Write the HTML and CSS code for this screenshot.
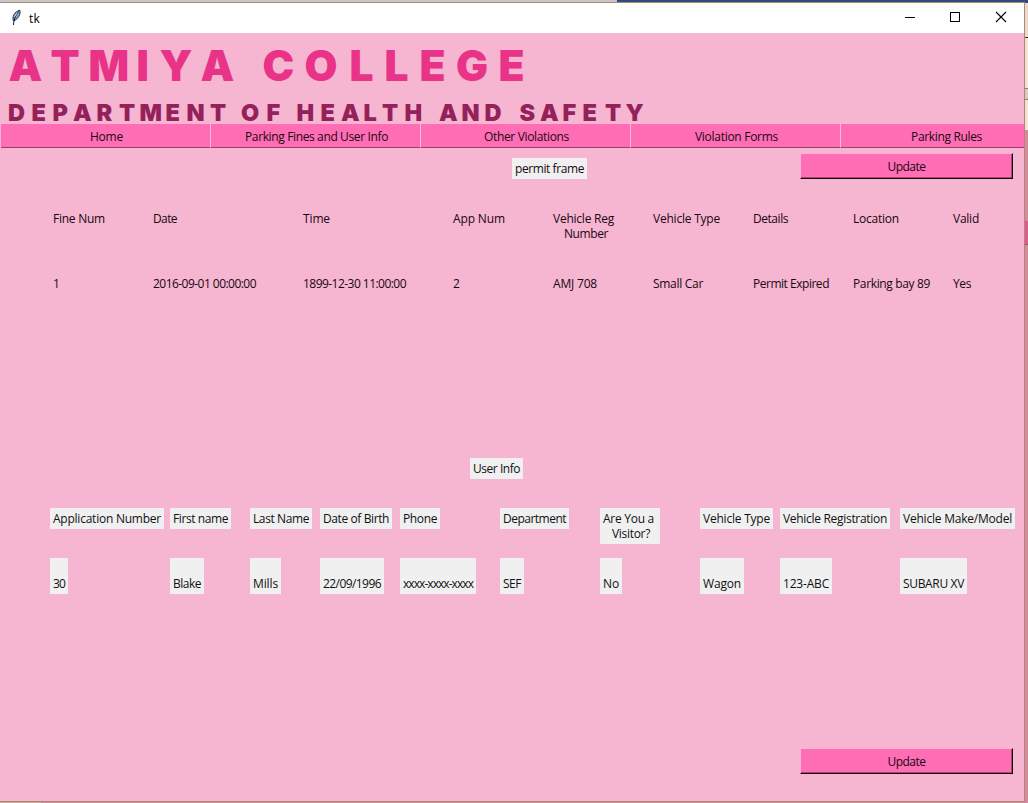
FILE: index.html
```html
<!DOCTYPE html>
<html lang="en">
<head>
<meta charset="utf-8">
<title>tk</title>
<link rel="stylesheet" href="styles.css">
</head>
<body>
<div class="desktop">
<div class="column">
  <div class="backdrop-top"><i></i></div>
  <main class="window">
    <header class="titlebar">
      <svg class="feather" width="12" height="18" viewBox="0 0 12 18"><path d="M3.500 12C1.700 8 4.500 2.600 9.800 1.200C11 4.500 8.800 9.800 3.500 12Z" fill="#7fa3d6" stroke="#18222f" stroke-width=".9"/><path d="M8.800 2.500C6 6 4 9 3.500 16" fill="none" stroke="#10151c"/><path d="M4.400 8L7.200 3.800" stroke="#b9d5f3"/></svg>
      <span class="name" data-w="11">tk</span>
      <svg class="controls" width="104" height="12" viewBox="0 0 104 12" fill="none" stroke="#000" stroke-width="1"><path d="M1 6.500H11"/><rect x="46.500" y="1.500" width="9" height="9"/><path d="M92 1L102 11M102 1L92 11" stroke-width="1.100"/></svg>
    </header>
    <svg class="banner" width="1024" height="91" viewBox="0 33 1024 91">
      <text class="college" y="81" x="8.500 50.500 88.500 136.500 159.500 200.500 247 262.500 304.500 349.500 384.500 419.500 456 498.500">ATMIYA COLLEGE</text>
      <text class="department" y="121" x="8 31.500 52.500 73 96.500 119 139.500 165.500 186.500 210 230 241 266.500 285 296.500 320.500 341 363.500 382 404.500 425 439 461.500 484.500 506 519.500 540 562.500 582.500 605 625.500">DEPARTMENT OF HEALTH AND SAFETY</text>
    </svg>
    <nav class="nav">
      <button><span data-w="33">Home</span></button>
      <button><span data-w="143">Parking Fines and User Info</span></button>
      <button><span data-w="85">Other Violations</span></button>
      <button><span data-w="83">Violation Forms</span></button>
      <button><span data-w="71">Parking Rules</span></button>
    </nav>
    <section class="permits">
      <div class="toolbar">
        <div class="label"><span data-w="69">permit frame</span></div>
        <button class="update"><span data-w="38">Update</span></button>
      </div>
      <div class="grid fines">
        <div class="label"><span data-w="52">Fine Num</span></div>
        <div class="label"><span data-w="24">Date</span></div>
        <div class="label"><span data-w="27">Time</span></div>
        <div class="label"><span data-w="52">App Num</span></div>
        <div class="label"><span data-w="61">Vehicle Reg</span><span class="second" data-w="44">Number</span></div>
        <div class="label"><span data-w="67">Vehicle Type</span></div>
        <div class="label"><span data-w="35">Details</span></div>
        <div class="label"><span data-w="46">Location</span></div>
        <div class="label"><span data-w="26">Valid</span></div>
        <div class="label value"><span data-w="6">1</span></div>
        <div class="label value"><span data-w="103">2016-09-01 00:00:00</span></div>
        <div class="label value"><span data-w="103">1899-12-30 11:00:00</span></div>
        <div class="label value"><span data-w="6">2</span></div>
        <div class="label value"><span data-w="44">AMJ 708</span></div>
        <div class="label value"><span data-w="50">Small Car</span></div>
        <div class="label value"><span data-w="76">Permit Expired</span></div>
        <div class="label value"><span data-w="77">Parking bay 89</span></div>
        <div class="label value"><span data-w="18">Yes</span></div>
      </div>
    </section>
    <section class="users">
      <div class="label heading"><span data-w="47">User Info</span></div>
      <div class="grid people">
        <div class="label"><span data-w="108">Application Number</span></div>
        <div class="label"><span data-w="55">First name</span></div>
        <div class="label"><span data-w="56">Last Name</span></div>
        <div class="label"><span data-w="66">Date of Birth</span></div>
        <div class="label"><span data-w="34">Phone</span></div>
        <div class="label"><span data-w="63">Department</span></div>
        <div class="label visitor"><span data-w="51">Are You a</span><span class="second" data-w="38">Visitor?</span></div>
        <div class="label"><span data-w="67">Vehicle Type</span></div>
        <div class="label"><span data-w="104">Vehicle Registration</span></div>
        <div class="label"><span data-w="109">Vehicle Make/Model</span></div>
        <div class="label value"><span data-w="12">30</span></div>
        <div class="label value"><span data-w="28">Blake</span></div>
        <div class="label value"><span data-w="25">Mills</span></div>
        <div class="label value"><span data-w="58">22/09/1996</span></div>
        <div class="label value"><span data-w="70">xxxx-xxxx-xxxx</span></div>
        <div class="label value"><span data-w="18">SEF</span></div>
        <div class="label value"><span data-w="16">No</span></div>
        <div class="label value"><span data-w="38">Wagon</span></div>
        <div class="label value"><span data-w="46">123-ABC</span></div>
        <div class="label value"><span data-w="61">SUBARU XV</span></div>
      </div>
      <button class="update"><span data-w="38">Update</span></button>
    </section>
  </main>
  <div class="backdrop-bottom"></div>
</div>
<aside class="backdrop-right"></aside>
</div>
<script src="labels.js"></script>
</body>
</html>
```

FILE: styles.css
```css
* { box-sizing: border-box; }
body { margin: 0; overflow: hidden; background: #d18a9c; color: #190812; font: 12px/15px "Open Sans", "Noto Sans", sans-serif; }
.desktop { display: flex; width: 1028px; height: 803px; }
.column { width: 1025px; display: flex; flex-direction: column; }
.backdrop-top { height: 2px; background: #304c83; flex: none; }
.backdrop-top i { display: block; width: 617px; height: 2px; background: #c4c8cc; }
.window { height: 800px; border: solid #b1896a; border-width: 1px 1px 1px 0; background: #f6b5d0; display: flex; flex-direction: column; overflow: hidden; flex: none; }
.backdrop-bottom { height: 1px; background: linear-gradient(90deg, #c5a99e 41px, #d08c9e 41px); }
.backdrop-right { width: 3px; background: linear-gradient(#304c83 3px, #e9dbd4 3px 37px, #39302d 37px 38px, #f0e2db 38px 88px, #8e7f7b 88px 89px, #d8cbc5 89px 99px, #8e7f7b 99px 100px, #f0e2db 100px 130px, #d58b9f 130px 221px, #dc5c90 221px 244px, #98586c 244px 245px, #d58b9f 245px); }
.titlebar { height: 30px; flex: none; background: #fff; color: #000; display: flex; align-items: center; padding: 0 16px 0 10px; }
.titlebar .name { margin-left: 7px; }
.controls { margin-left: auto; margin-top: -2px; }
.feather { margin-top: -1px; }
.banner { display: block; flex: none; }
.college, .department { font-family: Inter, sans-serif; font-weight: 900; }
.college { font-size: 42.5px; fill: #e83389; }
.department { font-size: 23.5px; fill: #942159; }
button { font: inherit; color: inherit; padding: 0; border: 0; background: #ff6eb4; display: flex; justify-content: center; align-items: center; }
.nav { display: flex; width: 1051px; flex: none; padding-left: 1px; }
.nav button { width: 210px; height: 24px; border-bottom: 1px solid #9c3d6d; border-right: 1px solid #f7bde0; padding: 1px 0 0 2px; }
span { display: block; white-space: nowrap; width: max-content; }
.permits { height: 310px; flex: none; padding-top: 5px; }
.toolbar { display: grid; grid-template-columns: 512px 288px 214px; height: 55px; align-items: start; }
.toolbar .label { grid-column: 2; margin-top: 5px; background: #f0f0f0; }
.update { width: 213px; height: 26px; border: 1px solid; border-color: #f9b1dc #16020c #16020c #f9b1dc; box-shadow: inset -1px -1px #a84776; }
.grid { display: grid; padding-left: 50px; grid-template-rows: 50px 50px; align-items: start; }
.fines { grid-template-columns: 100px 150px 150px 100px 100px 100px 100px 100px 74px; }
.people { grid-template-columns: 120px 80px 70px 80px 100px 100px 100px 80px 120px 124px; margin-top: 29px; }
.label { width: max-content; padding: 3px; }
.value { padding-top: 18px; }
.second { margin-left: 11px; }
.visitor { width: 60px; }
.visitor .second { margin-left: 9px; }
.users .label { background: #f0f0f0; color: #111; }
.heading { margin-left: 470px; }
.users .update { margin: 140px 0 0 800px; }
```

FILE: labels.js
```js
// Spread each caption's tracking so that it fills its own width.
document.querySelectorAll("[data-w]").forEach(el => {
  const target = Number(el.dataset.w);
  const natural = el.getBoundingClientRect().width;
  el.style.letterSpacing = (target - natural) / el.textContent.length + "px";
  el.style.width = target + "px";
});
```
